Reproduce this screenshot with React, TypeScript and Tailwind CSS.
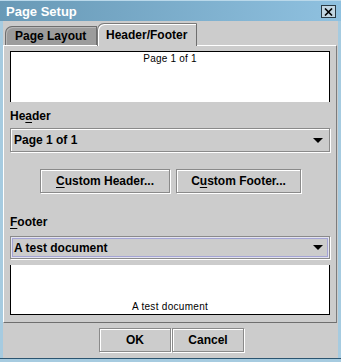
import React from 'react';

const font = { fontFamily: '"Liberation Sans", Arial, sans-serif' };

function Mn({ children }: { children: React.ReactNode }) {
  return <span className="underline decoration-1 underline-offset-[2px]">{children}</span>;
}

function Arrow() {
  return (
    <svg width="10" height="5" viewBox="0 0 10 5" className="shrink-0">
      <path d="M0 0H10L5 5Z" fill="#000" />
    </svg>
  );
}

function Combo({ text, focused }: { text: string; focused?: boolean }) {
  return (
    <div
      className={
        'flex items-center justify-between w-[320px] border border-[#8a8a8a] pl-[3px] pr-[6px] text-[12px] font-bold text-black ' +
        (focused
          ? 'h-[23px] shadow-[inset_0_0_0_1px_#e4e4f0,inset_0_0_0_2px_#a4a4d4,1px_1px_0_#fff]'
          : 'h-[24px] shadow-[inset_1px_1px_0_#fff,1px_1px_0_#fff]')
      }
    >
      <span>{text}</span>
      <Arrow />
    </div>
  );
}

function Btn({ children, w }: { children: React.ReactNode; w: string }) {
  return (
    <div
      className={
        'flex items-center justify-center h-[24px] border border-[#8a8a8a] bg-[#cccccc] text-[12px] font-bold text-black shadow-[inset_1px_1px_0_#fff,1px_1px_0_#fff] ' +
        w
      }
    >
      {children}
    </div>
  );
}

export default function App() {
  return (
    <div style={font} className="w-[341px] h-[362px] flex flex-col bg-[#a6cbe0] overflow-hidden">
      {/* title bar */}
      <div className="h-[21px] flex items-center justify-between pl-[6px] pr-[5px] bg-gradient-to-r from-[#6899b6] to-[#8fc1e0] border-t border-[#b9d8ea]">
        <span className="text-white font-bold text-[13px] leading-none">Page Setup</span>
        <div className="w-[15px] h-[13px] mt-[1px] border border-[#2a3a44] bg-[#c2d6e2] flex items-center justify-center">
          <svg width="9" height="8" viewBox="0 0 9 8">
            <path d="M1 0.5L8 7.5M8 0.5L1 7.5" stroke="#000" strokeWidth="1.6" />
          </svg>
        </div>
      </div>

      {/* body */}
      <div className="mx-[3px] w-[335px] h-[337px] bg-[#cccccc] flex flex-col">
        {/* tabs */}
        <div className="flex items-end pt-[2px] pl-[2px] h-[24px]">
          <div className="h-[19px] w-[92px] bg-[#9c9c9c] border-t border-l border-r border-[#6e6e6e] rounded-tl-[7px] flex items-center pl-[9px] text-[12px] font-bold text-black shadow-[inset_1px_1px_0_#b8b8b8]">
            Page Layout
          </div>
          <div className="relative z-10 -mb-px h-[23px] w-[100px] bg-[#cccccc] border-t border-l border-r border-t-[#7a7a7a] border-l-[#7a7a7a] border-r-[#6e6e6e] rounded-tl-[7px] flex items-center pl-[8px] pb-px text-[12px] font-bold text-black shadow-[inset_1px_1px_0_#fff]">
            Header/Footer
          </div>
        </div>

        {/* panel */}
        <div className="w-[334px] h-[278px] border-t border-l border-t-white border-l-white border-r border-b border-r-[#7c7c7c] border-b-[#6e6e6e] px-[6px] pt-[5px] flex flex-col">
          <div className="h-[51px] w-[320px] bg-white border-t border-l border-r border-black flex justify-center pt-[1px]">
            <span className="text-[10px] leading-[12px] tracking-[0.2px] text-black">Page 1 of 1</span>
          </div>

          <div className="mt-[7px] h-[14px] leading-[14px] text-[12px] font-bold text-black">
            He<Mn>a</Mn>der
          </div>
          <div className="mt-[5px]">
            <Combo text="Page 1 of 1" />
          </div>

          <div className="mt-[17px] flex justify-center gap-[6px] pl-[1px]">
            <Btn w="w-[130px]">
              <Mn>C</Mn>ustom Header...
            </Btn>
            <Btn w="w-[125px]">
              C<Mn>u</Mn>stom Footer...
            </Btn>
          </div>

          <div className="mt-[22px] h-[14px] leading-[14px] text-[12px] font-bold text-black">
            <Mn>F</Mn>ooter
          </div>
          <div className="mt-[7px]">
            <Combo text="A test document" focused />
          </div>

          <div className="mt-[6px] h-[50px] w-[320px] bg-white border-b border-l border-r border-black flex items-end justify-center pb-[1px]">
            <span className="text-[10px] leading-[12px] tracking-[0.3px] text-black">A test document</span>
          </div>
        </div>

        {/* buttons */}
        <div className="mt-[5px] flex justify-center gap-[1px] pl-[2px]">
          <Btn w="w-[72px]">OK</Btn>
          <Btn w="w-[72px]">Cancel</Btn>
        </div>
      </div>
      <div className="h-px bg-[#2c5570]" />
    </div>
  );
}
